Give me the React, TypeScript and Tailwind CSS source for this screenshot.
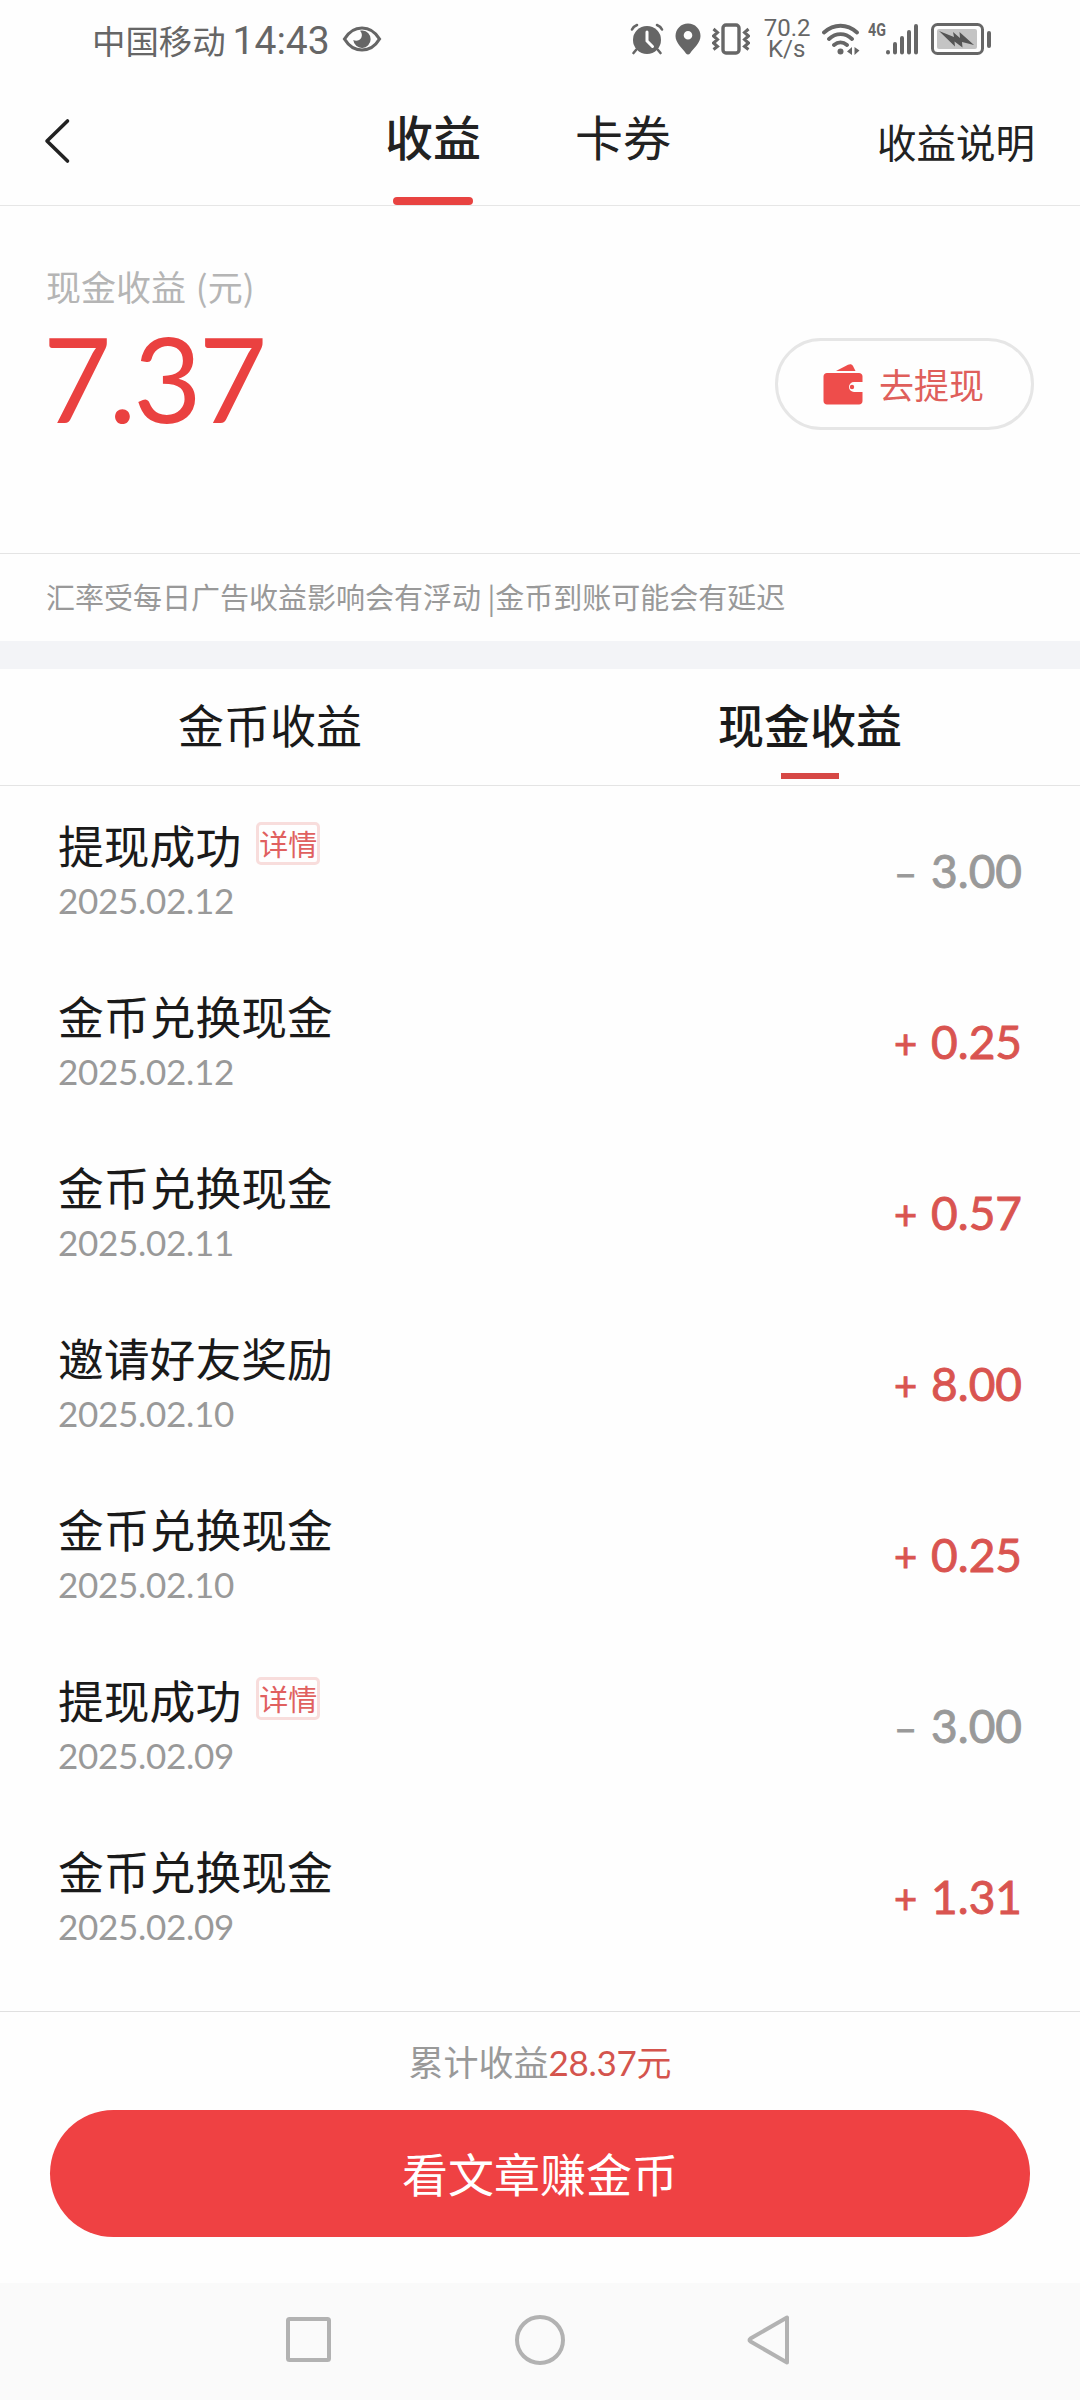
type Entry = {
  title: string;
  date: string;
  amount: string;
  income: boolean;
  detail?: boolean;
};

const entries: Entry[] = [
  { title: "提现成功", date: "2025.02.12", amount: "3.00", income: false, detail: true },
  { title: "金币兑换现金", date: "2025.02.12", amount: "0.25", income: true },
  { title: "金币兑换现金", date: "2025.02.11", amount: "0.57", income: true },
  { title: "邀请好友奖励", date: "2025.02.10", amount: "8.00", income: true },
  { title: "金币兑换现金", date: "2025.02.10", amount: "0.25", income: true },
  { title: "提现成功", date: "2025.02.09", amount: "3.00", income: false, detail: true },
  { title: "金币兑换现金", date: "2025.02.09", amount: "1.31", income: true },
];

const EyeIcon = () => (
  <svg className="ml-[12px] h-[28px] w-[40px]" viewBox="0 0 40 28" fill="none">
    <path d="M2.500 14C7 6.500 13 3 20 3s13 3.500 17.500 11C33 21.500 27 25 20 25S7 21.500 2.500 14z" stroke="#666" strokeWidth="3.200" />
    <path d="M20.500 5.500a8.700 8.700 0 1 1-9.200 9.500c2.500 1.500 6.500.8 8-2.200 1.200-2.500.5-5.300-1.300-7 .8-.2 1.700-.3 2.500-.3z" fill="#666" />
  </svg>
);

const AlarmIcon = () => (
  <svg className="h-[32px] w-[34px]" viewBox="0 0 34 32" fill="none" strokeLinecap="round">
    <circle cx="17" cy="17" r="14" fill="#666" />
    <path d="M2 6.500C3 4.500 4.500 3 7 2M32 6.500C31 4.500 29.500 3 27 2M6 27l-2.500 3M28 27l2.500 3" stroke="#666" strokeWidth="2.600" />
    <path d="M17 9v9l5.500 5.500" stroke="#fff" strokeWidth="3" />
  </svg>
);

const PinIcon = () => (
  <svg className="ml-[11px] h-[32px] w-[26px]" viewBox="0 0 26 32">
    <path
      d="M13 0.500C6 0.500.5 6 .5 13c0 7 6.500 11.500 10.500 17.500 1 1.300 3 1.300 4 0C19 24.500 25.500 20 25.500 13 25.500 6 20 .5 13 .5zM13 8a4.300 4.300 0 1 1 0 8.600A4.300 4.300 0 0 1 13 8z"
      fill="#666"
      fillRule="evenodd"
    />
  </svg>
);

const VibrateIcon = () => (
  <svg className="ml-[11px] h-[32px] w-[38px]" viewBox="0 0 38 32" fill="none" stroke="#666">
    <rect x="11" y="2" width="16" height="28" rx="3" strokeWidth="3.400" />
    <path d="M1.500 6l4 3.500-4 3.500 4 3.500-4 3.500 4 3.500-4 3M36.500 6l-4 3.500 4 3.500-4 3.500 4 3.500-4 3.500 4 3" strokeWidth="3" />
  </svg>
);

const WifiIcon = () => (
  <svg className="ml-[12px] h-[32px] w-[38px]" viewBox="0 0 38 32" fill="none" stroke="#666" strokeWidth="3.800" strokeLinecap="round">
    <path d="M2 9.500C12 .5 25 .5 35 9.500M7 16c7-6.500 16-6.500 23 0M12 22c4-3.500 9-3.500 13 0" />
    <circle cx="18.500" cy="28.500" r="3" fill="#666" stroke="none" />
    <path d="M30 24v8l-5-3.500zM32.500 24v8l5-4.500z" fill="#666" stroke="none" />
  </svg>
);

const SignalIcon = () => (
  <svg className="h-[32px] w-[34px]" viewBox="0 0 34 32" stroke="#666" strokeWidth="4" strokeLinecap="round">
    <path d="M3 29v.5M10 21v8.500M17 15v14.500M24 9v20.500M31 3v26.500" />
  </svg>
);

const BatteryIcon = () => (
  <svg className="ml-[12px] h-[33px] w-[61px]" viewBox="0 0 61 33" fill="none">
    <rect x="1.500" y="1.500" width="50" height="29" rx="5" stroke="#666" strokeWidth="3" />
    <rect x="6" y="6" width="40" height="20" rx="2" fill="#c4c4c4" />
    <path d="M8 8l15 6-1-5 7 6-.5-6L43 22l-12-3 .5 5.500-8-6 .5 5z" fill="#555" />
    <rect x="56" y="8" width="4" height="17" rx="2" fill="#666" />
  </svg>
);

const WalletIcon = () => (
  <svg className="h-[41px] w-[40px]" viewBox="0 0 40 41">
    <path d="M13 7L25 .8c2-1 4-.6 5 1.200L32.500 7z" fill="#ee4d4b" />
    <path
      d="M4 9h32c2 0 3.500 1.500 3.500 3.500V18H31a5 5 0 0 0 0 10h8.500v9c0 2-1.500 3.500-3.500 3.500H4C2 40.500.5 39 .5 37V12.500C.5 10.500 2 9 4 9z"
      fill="#ee4d4b"
    />
    <circle cx="29" cy="23" r="2.200" fill="#ee4d4b" />
  </svg>
);

const StatusBar = () => (
  <header className="flex h-[80px] items-start pl-[92px] text-[#666]">
    <div className="flex h-[80px] items-center text-[33.4px] leading-none">中国移动</div>
    <div className="ml-[7px] flex h-[82px] items-center font-[Roboto] text-[39px] leading-none">14:43</div>
    <div className="flex h-[78px] items-center">
      <EyeIcon />
    </div>
    <div className="ml-[248px] flex h-[78px] items-center">
      <AlarmIcon />
      <PinIcon />
      <VibrateIcon />
      <div className="ml-[14px] w-[46px] text-center font-[Roboto] text-[24px] leading-[21px]">
        <div>70.2</div>
        <div>K/s</div>
      </div>
      <WifiIcon />
      <div className="ml-[8px] h-[32px] w-[17px] origin-left scale-x-[0.75] font-[Roboto] text-[19px] leading-[14px] font-bold">4G</div>
      <SignalIcon />
      <BatteryIcon />
    </div>
  </header>
);

const TopNav = () => (
  <nav className="flex h-[126px] border-b border-[#e6e6e6] text-[#222]">
    <div className="w-[385px] pt-[38px] pl-[43px]">
      <svg className="h-[46px] w-[28px]" viewBox="0 0 28 46" fill="none" stroke="#222" strokeWidth="3.600" strokeLinecap="round" strokeLinejoin="round">
        <path d="M24.500 3L4 23l20.500 20" />
      </svg>
    </div>
    <div className="flex w-[96px] flex-col items-center justify-between">
      <span className="pt-[19px] text-[48px] leading-[72px] font-medium">收益</span>
      <span className="h-[8px] w-[80px] rounded-full bg-[#e84341]" />
    </div>
    <span className="ml-[94px] pt-[19px] text-[48px] leading-[72px]">卡券</span>
    <span className="ml-auto pt-[31px] pr-[45px] text-[39.5px] leading-[60px]">收益说明</span>
  </nav>
);

const Balance = () => (
  <section className="flex h-[348px] justify-between border-b border-[#e4e4e4] pr-[46px] pl-[46px]">
    <div className="pt-[55px]">
      <p className="text-[35px] leading-[50px] text-[#b5b5b5] [word-spacing:2px]">现金收益 (元)</p>
      <p className="-ml-[3px] pt-[7px] font-[Lato] text-[118px] leading-[120px] tracking-[-3px] text-[#ea4140]">7.37</p>
    </div>
    <button className="mt-[132px] flex h-[92px] w-[259px] items-center justify-center gap-[16px] rounded-full border-[3px] border-[#e6e6e6] pr-[2px] text-[35px] text-[#df5f5b]">
      <WalletIcon />
      去提现
    </button>
  </section>
);

const Tabs = () => (
  <div className="flex h-[117px] border-b border-[#e4e4e4] text-[46px] leading-[68px] text-[#1a1a1a]">
    <div className="flex-1 pt-[20px] text-center">金币收益</div>
    <div className="flex flex-1 flex-col items-center pt-[20px] font-medium">
      现金收益
      <span className="mt-[16px] h-[6px] w-[58px] bg-[#d64845]" />
    </div>
  </div>
);

const Row = ({ title, date, amount, income, detail }: Entry) => (
  <li className="flex h-[171px] justify-between pr-[58px] pl-[58px]">
    <div className="pt-[24px]">
      <div className="flex h-[68px] items-start">
        <span className="text-[45.8px] leading-[68px] text-[#1a1a1a]">{title}</span>
        {detail && (
          <span className="mt-[12px] ml-[15px] flex h-[43px] w-[64px] items-center justify-center rounded-[5px] border-[3px] border-[#f8dddc] text-[29px] leading-none text-[#e0605f]">
            详情
          </span>
        )}
      </div>
      <p className="pt-[1px] font-[Lato] text-[35px] leading-[42px] tracking-[-0.3px] text-[#999]">{date}</p>
    </div>
    <div
      className={`flex items-baseline pt-[57px] font-[Lato] leading-[56px] [-webkit-text-stroke:0.9px_currentColor] ${income ? "text-[#d95450]" : "text-[#999]"}`}
    >
      <span className="mr-[14px] text-[40px]">{income ? "+" : "–"}</span>
      <span className="text-[46px]">{amount}</span>
    </div>
  </li>
);

const Footer = () => (
  <footer className="flex h-[272px] flex-col items-center border-t border-[#e0e0e0] pt-[24px]">
    <p className="text-[35px] leading-[50px] text-[#999]">
      累计收益
      <span className="text-[#d4544d]">
        <span className="font-[Lato] tracking-[-0.3px]">28.37</span>元
      </span>
    </p>
    <button className="mt-[23px] h-[127px] w-[980px] rounded-full bg-[#ef4143] pb-[2px] text-[46px] text-white">看文章赚金币</button>
  </footer>
);

const SystemNav = () => (
  <div className="flex h-[117px] justify-center gap-[180px] bg-[#fafafa] pt-[31px]">
    <svg className="h-[52px] w-[52px]" viewBox="0 0 52 52" fill="none" stroke="#b2b2b2" strokeWidth="4">
      <rect x="6" y="5" width="41" height="41" rx="1.500" />
    </svg>
    <svg className="h-[52px] w-[52px]" viewBox="0 0 52 52" fill="none" stroke="#b2b2b2" strokeWidth="4">
      <circle cx="26" cy="26" r="23" />
    </svg>
    <svg className="h-[52px] w-[52px]" viewBox="0 0 52 52" fill="none" stroke="#b2b2b2" strokeWidth="4" strokeLinejoin="round">
      <path d="M41 3.500v45L4.500 27.500q-2-1.500 0-3z" />
    </svg>
  </div>
);

export default function App() {
  return (
    <div className="h-[2400px] w-[1080px] overflow-hidden bg-[#fefefe] font-['Noto_Sans_CJK_SC',sans-serif]">
      <StatusBar />
      <TopNav />
      <Balance />
      <p className="h-[87px] pt-[21px] pl-[46px] text-[29px] leading-[42px] text-[#999]">汇率受每日广告收益影响会有浮动 |金币到账可能会有延迟</p>
      <div className="h-[28px] bg-[#f3f4f7]" />
      <Tabs />
      <ul className="h-[1225px]">
        {entries.map((entry, i) => (
          <Row key={i} {...entry} />
        ))}
      </ul>
      <Footer />
      <SystemNav />
    </div>
  );
}
